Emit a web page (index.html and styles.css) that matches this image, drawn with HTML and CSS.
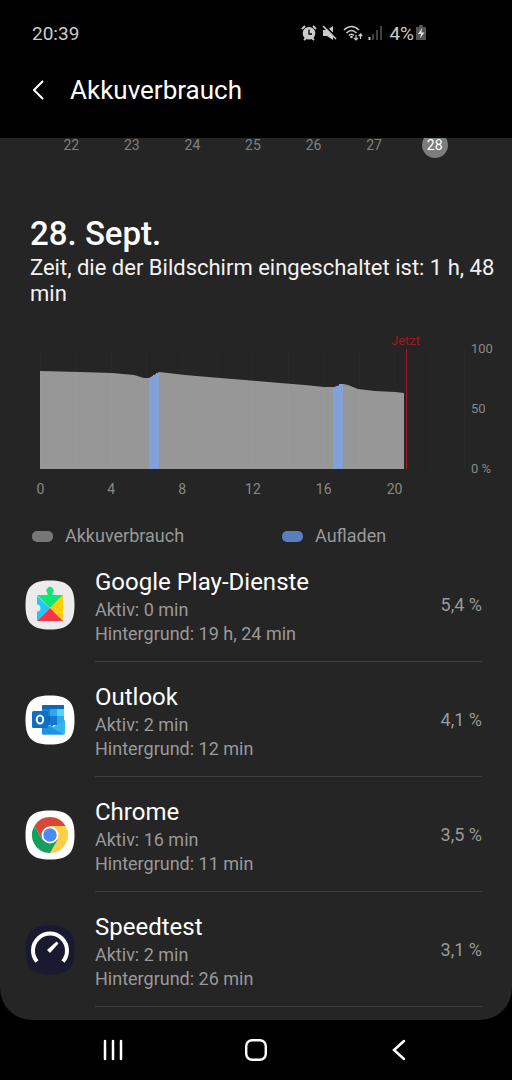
FILE: index.html
```
<!DOCTYPE html>
<html lang="de">
<head>
  <meta charset="UTF-8">
  <meta name="viewport" content="width=device-width, initial-scale=1">
  <title>Akkuverbrauch</title>
  <link rel="stylesheet" href="styles.css">
</head>
<body>
  <div class="statusbar">
    <span>20:39</span>
    <div class="status-icons">
      <!-- alarm -->
      <svg width="16" height="16" viewBox="0 0 16 16">
        <path d="M1 4 L4 1 M15 4 L12 1 M3 15 L5 13 M13 15 L11 13" stroke="#ccc" stroke-width="1.8" fill="none"/>
        <circle cx="8" cy="8.3" r="6.3" fill="#ccc"/>
        <path d="M8 4.5 V9 H11" stroke="#000" stroke-width="1.3" fill="none"/>
      </svg>
      <!-- mute -->
      <svg width="16" height="16" viewBox="0 0 16 16">
        <path d="M1 5 H5 L11 1 V15 L5 11 H1 Z" fill="#ccc"/>
        <path d="M2 0 L16 14" stroke="#000" stroke-width="2"/>
        <path d="M1 1 L14 14" stroke="#ccc" stroke-width="1.6"/>
      </svg>
      <!-- wifi -->
      <svg width="20" height="16" viewBox="0 0 20 16">
        <g stroke="#ccc" stroke-width="1.6" fill="none">
          <path d="M1 5 Q8.500 -2 16 5"/>
          <path d="M3.500 8 Q8.500 3 13.500 8"/>
          <path d="M6 10.500 Q8.500 8 11 10.500"/>
        </g>
        <circle cx="8.500" cy="12" r="1.300" fill="#ccc"/>
        <path d="M13 10 V15 M11 13 L13 15 L15 13 M17.500 14 V9 M15.700 11 L17.500 9 L19.300 11" stroke="#ccc" stroke-width="1.200" fill="none"/>
      </svg>
      <!-- signal -->
      <svg width="14" height="16" viewBox="0 0 14 16">
        <path d="M1.500 12 V15" stroke="#ccc" stroke-width="2"/>
        <path d="M5 9 V15 M9 5 V15 M13 1 V15" stroke="#505050" stroke-width="1.600"/>
      </svg>
      <span class="percent">4%</span>
      <!-- battery -->
      <svg width="10" height="16" viewBox="0 0 10 16">
        <path d="M3 0 H7 V2 H10 V15 H0 V2 H3 Z" fill="#555"/>
        <path d="M6 3 L2 9 H5 L4 13.500 L8.500 7.500 H5.500 Z" fill="#ddd"/>
      </svg>
    </div>
  </div>

  <header>
    <button class="back" aria-label="Zurück">
      <svg width="12" height="20" viewBox="0 0 12 20"><path d="M10 1 L1 10 L10 19" fill="none" stroke="#fff" stroke-width="2"/></svg>
    </button>
    <h1>Akkuverbrauch</h1>
  </header>

  <main>
    <div class="days">
      <button>22</button>
      <button>23</button>
      <button>24</button>
      <button>25</button>
      <button>26</button>
      <button>27</button>
      <button class="active">28</button>
    </div>

    <section class="summary">
      <h2>28. Sept.</h2>
      <p>Zeit, die der Bildschirm eingeschaltet ist: 1 h, 48 min</p>
    </section>

    <section class="chart">
      <div class="plot">
        <svg viewBox="0 0 425 120" preserveAspectRatio="none">
          <path d="M0 22 L40 23 L72 24 L94 26 L104 29 H109 L119 23 L128 24 L145 26 L180 29 L205 31 L240 34 L265 36 L284 38 H294 L303 35 L308 36 L318 40 L335 42 L355 43 L364 44 V120 H0 Z" fill="#979797"/>
          <path d="M109 29 H111 V28 H113 V26 H116 V24 H119 V120 H109 Z M293 38 H296 V37 H299 V35 H303 V120 H293 Z" fill="#82a1d8"/>
          <path d="M0.500 0 V120 M35.500 0 V120 M71.500 0 V120 M106.500 0 V120 M142.500 0 V120 M177.500 0 V120 M212.500 0 V120 M248.500 0 V120 M283.500 0 V120 M319.500 0 V120 M354.500 0 V120 M390.500 0 V120 M424.500 0 V120" stroke="#fff" stroke-opacity="0.02"/>
          <path d="M366.500 0 V120" stroke="#a01820"/>
        </svg>
        <span class="now">Jetzt</span>
      </div>
      <div class="y-axis">
        <span>100</span>
        <span>50</span>
        <span>0 %</span>
      </div>
      <div class="x-axis">
        <span>0</span>
        <span>4</span>
        <span>8</span>
        <span>12</span>
        <span>16</span>
        <span>20</span>
      </div>
    </section>

    <div class="legend">
      <span><i class="usage"></i>Akkuverbrauch</span>
      <span><i class="charge"></i>Aufladen</span>
    </div>

    <ul class="apps">
      <li>
        <svg class="icon" viewBox="0 0 50 50">
          <path d="M25 0.500 C43 0.500 49.500 7 49.500 25 S43 49.500 25 49.500 S0.500 43 0.500 25 S7 0.500 25 0.500 Z" fill="#ececec"/>
          <path d="M12 16 L25 28 L12 41 V31.500 A3.500 3.500 0 1 0 12 24.500 Z" fill="#1fc8fb"/>
          <path d="M12 15 H22.500 V13 A3.500 3.500 0 1 1 27.500 13 V15 H38 L25 28 Z" fill="#0ee676"/>
          <path d="M38 15 V41 L25 28 Z" fill="#ffce0a"/>
          <path d="M12 41 L25 28 L38 41 Z" fill="#f73549"/>
        </svg>
        <div class="info">
          <h3>Google Play-Dienste</h3>
          <p>Aktiv: 0 min</p>
          <p>Hintergrund: 19 h, 24 min</p>
        </div>
        <span class="value">5,4 %</span>
      </li>
      <li>
        <svg class="icon" viewBox="0 0 50 50">
          <path d="M25 0.500 C43 0.500 49.500 7 49.500 25 S43 49.500 25 49.500 S0.500 43 0.500 25 S7 0.500 25 0.500 Z" fill="#fff"/>
          <rect x="17" y="10" width="22" height="20" rx="1" fill="#1066b5"/>
          <rect x="17" y="14" width="8" height="7" fill="#1c7fd6"/>
          <rect x="25" y="14" width="7" height="7" fill="#30a8e8"/>
          <rect x="32" y="14" width="7" height="7" fill="#50d4fa"/>
          <rect x="25" y="21" width="7" height="9" fill="#1478d0"/>
          <rect x="32" y="21" width="7" height="9" fill="#2fa8e8"/>
          <path d="M17 27 L28 32 L40 25 V38 Q40 39.500 38.500 39.500 H18 Q17 39.500 17 38 Z" fill="#33b4ee"/>
          <path d="M17 27 L39 39.500 H18 Q17 39.500 17 38 Z" fill="#1c94e0"/>
          <path d="M22 27 H31 L27 32 Z" fill="#1478d0"/>
          <rect x="7" y="16" width="16" height="17" rx="1.500" fill="#0f6fc6"/>
          <ellipse cx="15" cy="24.500" rx="3.200" ry="3.900" fill="none" stroke="#fff" stroke-width="2"/>
        </svg>
        <div class="info">
          <h3>Outlook</h3>
          <p>Aktiv: 2 min</p>
          <p>Hintergrund: 12 min</p>
        </div>
        <span class="value">4,1 %</span>
      </li>
      <li>
        <svg class="icon" viewBox="0 0 50 50">
          <path d="M25 0.500 C43 0.500 49.500 7 49.500 25 S43 49.500 25 49.500 S0.500 43 0.500 25 S7 0.500 25 0.500 Z" fill="#fff"/>
          <path d="M9.400 16 A18 18 0 0 1 40.600 16 L25 16 L17.200 29.500 Z" fill="#d8473b"/>
          <path d="M40.600 16 A18 18 0 0 1 25 43 L32.800 29.500 L25 16 Z" fill="#fdcf48"/>
          <path d="M25 43 A18 18 0 0 1 9.400 16 L17.200 29.500 L32.800 29.500 Z" fill="#14a05c"/>
          <circle cx="25" cy="25" r="8.500" fill="#fff"/>
          <circle cx="25" cy="25" r="6.700" fill="#4b8af4"/>
        </svg>
        <div class="info">
          <h3>Chrome</h3>
          <p>Aktiv: 16 min</p>
          <p>Hintergrund: 11 min</p>
        </div>
        <span class="value">3,5 %</span>
      </li>
      <li>
        <svg class="icon" viewBox="0 0 50 50">
          <path d="M25 0.500 C43 0.500 49.500 7 49.500 25 S43 49.500 25 49.500 S0.500 43 0.500 25 S7 0.500 25 0.500 Z" fill="#191a30"/>
          <path d="M12 36.500 A17 17 0 1 1 38 36.500" fill="none" stroke="#fff" stroke-width="4"/>
          <path d="M31.500 16.500 L33.500 18.500 L25 28 L22 25 Z" fill="#fff"/>
        </svg>
        <div class="info">
          <h3>Speedtest</h3>
          <p>Aktiv: 2 min</p>
          <p>Hintergrund: 26 min</p>
        </div>
        <span class="value">3,1 %</span>
      </li>
    </ul>
  </main>

  <nav>
    <button aria-label="Letzte Apps">
      <svg width="22" height="22" viewBox="0 0 22 22"><path d="M3 2 V20 M11 2 V20 M19 2 V20" stroke="#fff" stroke-width="2.500" stroke-linecap="round"/></svg>
    </button>
    <button aria-label="Startbildschirm">
      <svg width="22" height="22" viewBox="0 0 22 22"><rect x="1.200" y="1.200" width="19.600" height="19.600" rx="6" fill="none" stroke="#fff" stroke-width="2.400"/></svg>
    </button>
    <button aria-label="Zurück">
      <svg width="22" height="22" viewBox="0 0 22 22"><path d="M16 2 L6 11 L16 20" fill="none" stroke="#fff" stroke-width="2.500" stroke-linecap="round"/></svg>
    </button>
  </nav>
</body>
</html>
```

FILE: styles.css
```
* {
  box-sizing: border-box;
}
body {
  font-family: Roboto, sans-serif;
  background-color: #000;
  color: #fff;
  margin: 0;
  min-height: 100vh;
  display: flex;
  flex-direction: column;
}
h1, h2, h3, p, ul {
  margin: 0;
  padding: 0;
  font-weight: 400;
}
button {
  background: none;
  border: 0;
  padding: 0;
  color: inherit;
  font: inherit;
  cursor: pointer;
}
svg {
  display: block;
}
.statusbar {
  display: flex;
  justify-content: space-between;
  align-items: center;
  height: 66px;
  padding: 0 86px 0 32px;
  font-size: 19px;
  color: #ccc;
}
.status-icons {
  display: flex;
  align-items: center;
  gap: 5px;
}
.status-icons .percent {
  margin: 0 -3px 0 2px;
}
header {
  display: flex;
  align-items: center;
  gap: 25px;
  height: 48px;
  margin-bottom: 24px;
  padding: 0 33px;
}
h1 {
  font-size: 26px;
}
main {
  flex: 1;
  background-color: #252525;
  border-radius: 0 0 32px 32px;
  overflow: hidden;
  padding-bottom: 13px;
}
.days {
  display: grid;
  grid-template-columns: repeat(7, 1fr);
  justify-items: center;
  margin-top: -6px;
  padding: 0 47px 0 41px;
  font-size: 14px;
  color: #808080;
}
.days button {
  width: 26px;
  height: 26px;
  border-radius: 50%;
}
.days .active {
  background-color: #7c7c7c;
  color: #fff;
}
.summary {
  padding: 54px 16px 0 30px;
}
h2 {
  font-size: 33px;
  font-weight: 500;
  line-height: 43px;
}
.summary p {
  font-size: 22px;
  line-height: 26px;
  color: #f2f2f2;
}
.chart {
  display: grid;
  grid-template-columns: 1fr 40px;
  row-gap: 12px;
  margin-top: 42px;
  padding: 0 7px 0 40px;
  font-size: 14px;
  line-height: 16px;
  color: #888;
}
.plot {
  position: relative;
}
.plot svg {
  width: 100%;
  height: 120px;
}
.now {
  position: absolute;
  left: 86%;
  bottom: 100%;
  transform: translateX(-50%);
  font-size: 13px;
  color: #a01820;
}
.y-axis {
  display: flex;
  flex-direction: column;
  justify-content: space-between;
  margin: -8px 0;
  padding-left: 6px;
  font-size: 13px;
}
/* labels are centred on the start of their 4h segment */
.x-axis {
  display: grid;
  grid-template-columns: repeat(6, 1fr);
  margin: 0 35px 0 -35px;
  text-align: center;
}
.legend {
  display: grid;
  grid-template-columns: 25fr 23fr;
  margin-top: 28px;
  padding-left: 32px;
  font-size: 18px;
  line-height: 22px;
  color: #999;
}
.legend span {
  display: flex;
  align-items: center;
  gap: 12px;
}
.legend i {
  width: 21px;
  height: 11px;
  border-radius: 5px;
}
.usage {
  background-color: #777;
}
.charge {
  background-color: #5a7fbd;
}
.apps {
  list-style: none;
}
.apps li {
  position: relative;
  display: flex;
  align-items: center;
  gap: 20px;
  padding: 0 30px 0 25px;
}
/* divider starts under the text, not the icon */
.apps li::after {
  content: "";
  position: absolute;
  left: 95px;
  right: 30px;
  bottom: 0;
  height: 1px;
  background-color: #404040;
}
.icon {
  width: 50px;
  height: 50px;
}
.info {
  flex: 1;
  padding: 19px 0 16px;
}
h3 {
  font-size: 24px;
  line-height: 32px;
}
.info p, .value {
  font-size: 18px;
  line-height: 24px;
  color: #999;
}
nav {
  display: flex;
  justify-content: space-between;
  align-items: center;
  height: 60px;
  padding: 0 102px;
}
```
